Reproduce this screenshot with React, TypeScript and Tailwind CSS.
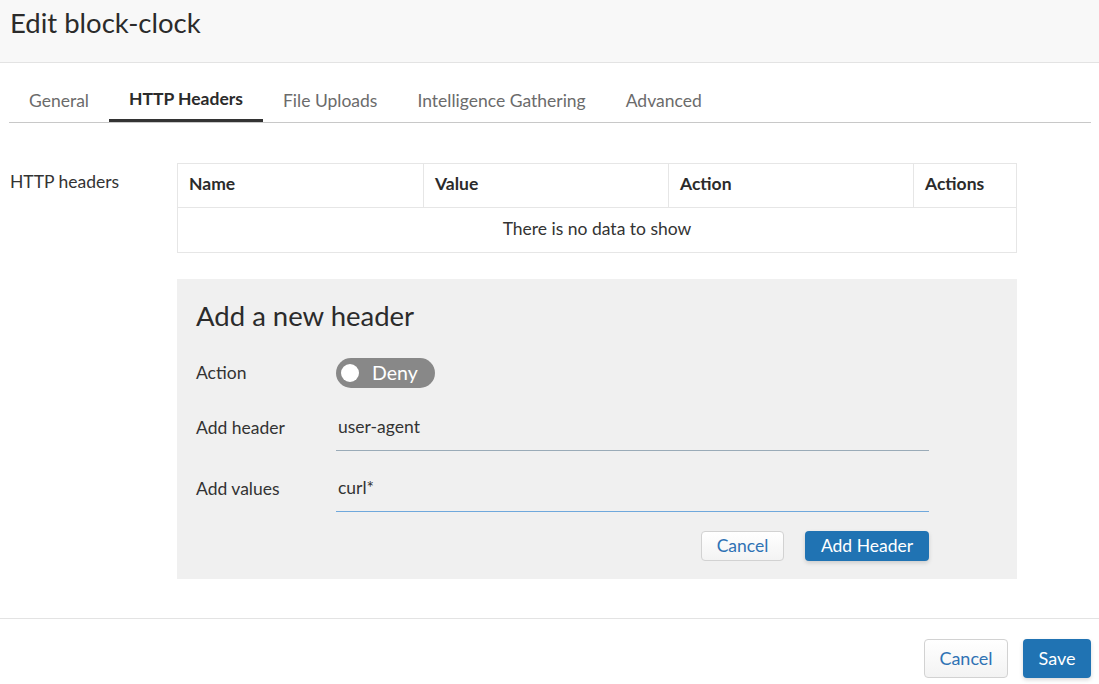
const tabs = ["General", "HTTP Headers", "File Uploads", "Intelligence Gathering", "Advanced"];

const columns = [
  { label: "Name", width: "w-[246px]" },
  { label: "Value", width: "w-[245px]" },
  { label: "Action", width: "w-[245px]" },
  { label: "Actions", width: "flex-1" },
];

export default function App() {
  return (
    <div className="w-[1099px] h-[684px] bg-white text-[#333] font-['Lato','Noto_Sans',sans-serif] overflow-hidden">
      {/* title bar */}
      <div className="h-[63px] bg-[#f8f8f8] border-b border-[#e3e3e3] px-[10px] pt-[5px]">
        <h1 className="text-[27.5px] leading-[36px] text-[#2b2b2b]">Edit block-clock</h1>
      </div>

      {/* tabs */}
      <div className="mt-[17px] ml-[9px] mr-[8px] flex border-b border-[#c8c8c8]">
        {tabs.map((t) => (
          <div
            key={t}
            className={
              t === "HTTP Headers"
                ? "h-[42px] px-[20px] flex items-center text-[17.5px] font-bold text-[#2b2b2b] border-b-[3px] border-[#333] -mb-px"
                : "h-[42px] px-[20px] flex items-center text-[17.5px] text-[#6b6b6b]"
            }
          >
            {t}
          </div>
        ))}
      </div>

      {/* content */}
      <div className="flex mt-[40px]">
        <div className="w-[177px] pl-[10px] pt-[9px] text-[17.5px] leading-[20px]">HTTP headers</div>
        <div className="w-[840px]">
          <div className="border border-[#e6e6e6]">
            <div className="flex h-[43px]">
              {columns.map((c, i) => (
                <div
                  key={c.label}
                  className={
                    "flex items-center px-[11px] pb-[3px] text-[17.5px] font-bold text-[#2b2b2b] " +
                    c.width +
                    (i < columns.length - 1 ? " border-r border-[#e6e6e6]" : "")
                  }
                >
                  {c.label}
                </div>
              ))}
            </div>
            <div className="h-[45px] pb-[2px] border-t border-[#e6e6e6] flex items-center justify-center text-[17.5px]">
              There is no data to show
            </div>
          </div>

          {/* add form */}
          <div className="mt-[26px] h-[300px] bg-[#f0f0f0] pl-[19px] pr-[88px] pt-[20px]">
            <h2 className="text-[27.5px] leading-[34px] text-[#2b2b2b]">Add a new header</h2>

            <div className="flex items-center mt-[25px] h-[30px]">
              <div className="w-[140px] text-[17.5px]">Action</div>
              <div className="w-[99px] h-[30px] rounded-full bg-[#888] flex items-center pl-[5px] gap-[13px]">
                <span className="w-[18px] h-[18px] rounded-full bg-white"></span>
                <span className="text-white text-[19.5px] pb-[1px]">Deny</span>
              </div>
            </div>

            <div className="flex items-center mt-[23px]">
              <div className="w-[140px] pb-[6px] text-[17.5px]">Add header</div>
              <div className="flex-1 h-[40px] pb-[6px] border-b border-[#9aabb8] flex items-center pl-[2px] text-[17.5px]">
                user-agent
              </div>
            </div>

            <div className="flex items-center mt-[21px]">
              <div className="w-[140px] pb-[6px] text-[17.5px]">Add values</div>
              <div className="flex-1 h-[40px] pb-[6px] border-b border-[#6fa8dc] flex items-center pl-[2px] text-[17.5px]">
                curl*
              </div>
            </div>

            <div className="flex justify-end gap-[21px] mt-[19px]">
              <button className="w-[83px] h-[30px] rounded-[4px] border border-[#d2d2d2] bg-gradient-to-b from-white to-[#f3f3f3] text-[17.5px] text-[#2f72b4]">
                Cancel
              </button>
              <button className="w-[124px] h-[30px] rounded-[4px] bg-[#2073b3] text-white text-[17.5px] shadow-[0_2px_4px_rgba(0,0,0,0.15)]">
                Add Header
              </button>
            </div>
          </div>
        </div>
      </div>

      {/* footer */}
      <div className="mt-[39px] border-t border-[#e3e3e3] flex justify-end gap-[15px] pr-[8px] pt-[20px]">
        <button className="w-[84px] h-[39px] rounded-[4px] border border-[#d2d2d2] bg-gradient-to-b from-white to-[#f3f3f3] text-[18px] text-[#2f72b4]">
          Cancel
        </button>
        <button className="w-[68px] h-[39px] rounded-[4px] bg-[#2073b3] text-white text-[18px] shadow-[0_2px_4px_rgba(0,0,0,0.15)]">
          Save
        </button>
      </div>
    </div>
  );
}
